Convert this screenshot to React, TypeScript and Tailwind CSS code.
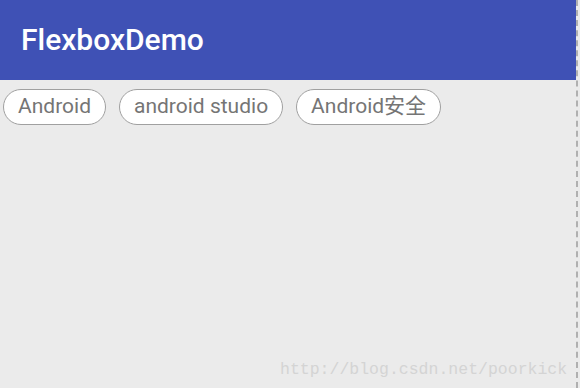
import React from 'react';

const tags = ['Android', 'android studio', 'Android安全'];

export default function App() {
  return (
    <div className="relative w-[580px] h-[388px] bg-[#ebebeb] flex overflow-hidden">
      <div className="w-[578px] h-full flex flex-col border-r-2 border-dashed border-[#b0b0b0]">
        <header className="h-[80px] bg-[#3f51b5] flex items-center pl-[21px]">
          <h1 className="text-white text-[30px] font-medium font-['Roboto',sans-serif] -mt-[2px]">
            FlexboxDemo
          </h1>
        </header>
        <div className="flex flex-wrap gap-[13px] pl-[3px] pt-[9px]">
          {tags.map((t) => (
            <span
              key={t}
              className="h-[36px] px-[14px] flex items-center rounded-full bg-white border border-[#a0a0a0] text-[#757575] text-[21px] font-['Roboto','Noto_Sans_CJK_SC',sans-serif]"
            >
              {t}
            </span>
          ))}
        </div>
      </div>
      <span className="absolute left-[280px] top-[358px] text-[16.5px] text-[#d4d4d4] font-['Liberation_Mono',monospace]">
        http://blog.csdn.net/poorkick
      </span>
    </div>
  );
}
